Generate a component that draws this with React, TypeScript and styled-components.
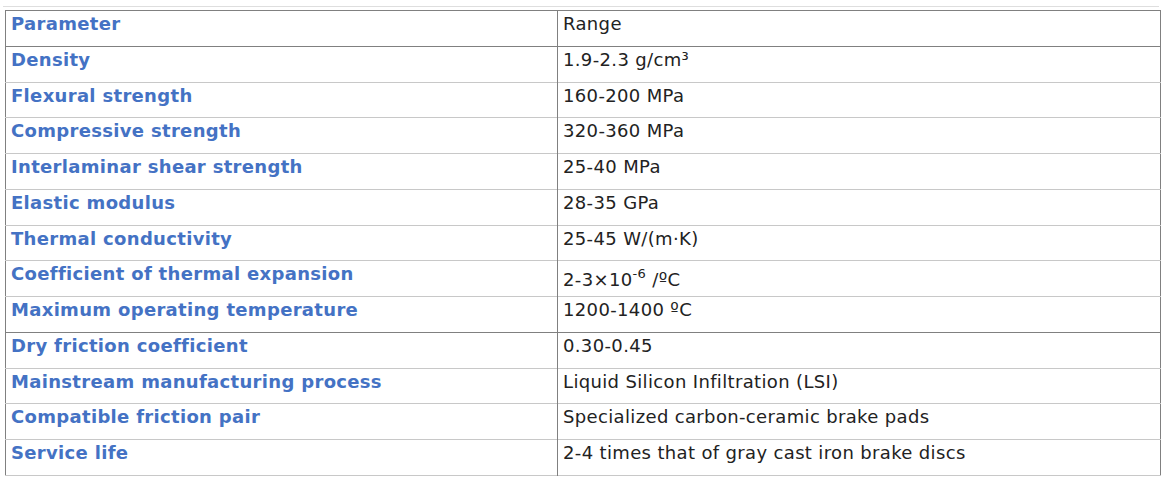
import React from "react";
import styled, { createGlobalStyle } from "styled-components";

const Global = createGlobalStyle`
  html, body { margin: 0; padding: 0; background: #ffffff; }
  body { font-family: "DejaVu Sans", Verdana, sans-serif; }
`;

const Page = styled.div`
  padding: 6px 0 0 3px;
`;

const Rule = styled.div`
  width: 1156px;
  height: 1px;
  background: #dedede;
  margin-bottom: 3px;
`;

const Table = styled.table`
  border-collapse: collapse;
  table-layout: fixed;
  width: 1156px;
  margin-left: 2px;
  border-left: 1px solid #808080;
  border-right: 1px solid #808080;
  border-top: 1px solid #808080;
`;

const NameCol = styled.col`
  width: 552px;
`;

const Row = styled.tr<{ $strong?: boolean }>`
  height: 35.77px;
  border-bottom: 1px solid ${(p) => (p.$strong ? "#808080" : "#c8c8c8")};
`;

const Name = styled.td`
  padding: 2px 5px 0 5px;
  vertical-align: top;
  border-right: 1px solid #808080;
  font-weight: bold;
  font-size: 18px;
  line-height: 21px;
  letter-spacing: 0.32px;
  color: #4472c4;
  white-space: nowrap;
`;

const Value = styled.td`
  padding: 2px 5px 0 5px;
  vertical-align: top;
  font-size: 18px;
  line-height: 21px;
  letter-spacing: 0.35px;
  color: #222222;
  white-space: nowrap;
`;

const Raised = styled.span`
  display: inline-block;
  padding-top: 6px;
`;

const Sup = styled.sup`
  font-size: 13px;
  line-height: 0;
  vertical-align: 8px;
`;

type Item = { name: string; value: React.ReactNode; strong?: boolean };

const rows: Item[] = [
  { name: "Parameter", value: "Range", strong: true },
  { name: "Density", value: "1.9-2.3 g/cm³" },
  { name: "Flexural strength", value: "160-200 MPa" },
  { name: "Compressive strength", value: "320-360 MPa" },
  { name: "Interlaminar shear strength", value: "25-40 MPa" },
  { name: "Elastic modulus", value: "28-35 GPa" },
  { name: "Thermal conductivity", value: "25-45 W/(m·K)" },
  {
    name: "Coefficient of thermal expansion",
    value: (
      <Raised>
        2-3×10<Sup>-6</Sup> /ºC
      </Raised>
    ),
  },
  { name: "Maximum operating temperature", value: "1200-1400 ºC", strong: true },
  { name: "Dry friction coefficient", value: "0.30-0.45" },
  { name: "Mainstream manufacturing process", value: "Liquid Silicon Infiltration (LSI)" },
  { name: "Compatible friction pair", value: "Specialized carbon-ceramic brake pads" },
  { name: "Service life", value: "2-4 times that of gray cast iron brake discs" },
];

export default function App() {
  return (
    <>
      <Global />
      <Page>
        <Rule />
        <Table>
          <colgroup>
            <NameCol />
            <col />
          </colgroup>
          <tbody>
            {rows.map((r) => (
              <Row key={r.name} $strong={r.strong}>
                <Name>{r.name}</Name>
                <Value>{r.value}</Value>
              </Row>
            ))}
          </tbody>
        </Table>
      </Page>
    </>
  );
}
